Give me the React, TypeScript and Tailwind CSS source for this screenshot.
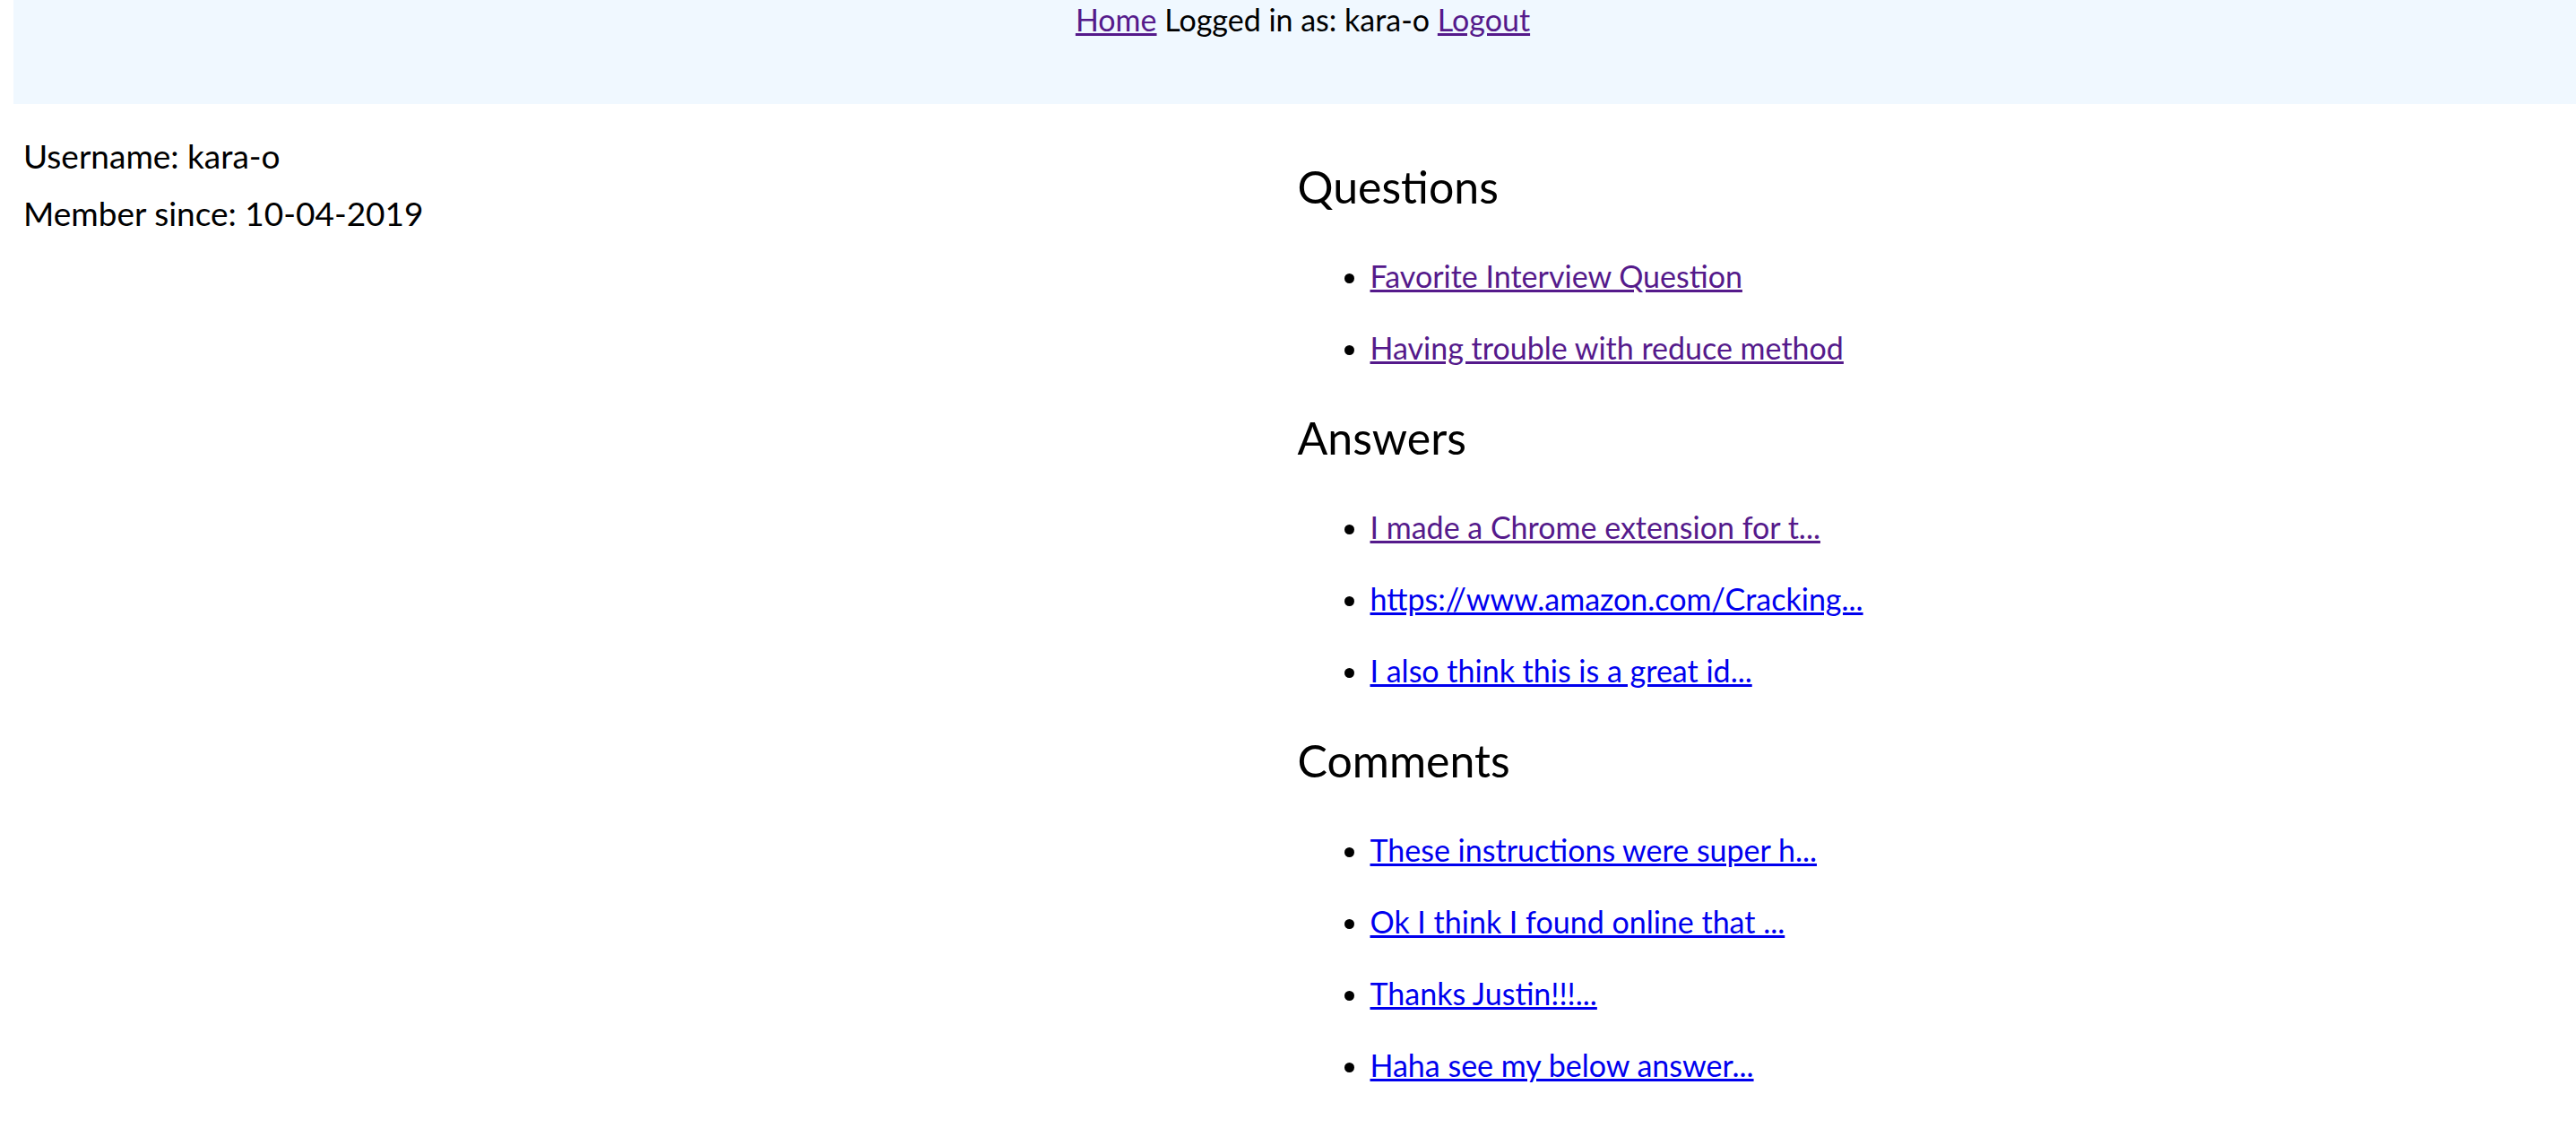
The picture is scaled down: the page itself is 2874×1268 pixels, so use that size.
const questions = [
  { label: "Favorite Interview Question", visited: true },
  { label: "Having trouble with reduce method", visited: true },
];

const answers = [
  { label: "I made a Chrome extension for t...", visited: true },
  { label: "https://www.amazon.com/Cracking...", visited: false },
  { label: "I also think this is a great id...", visited: false },
];

const comments = [
  { label: "These instructions were super h...", visited: false },
  { label: "Ok I think I found online that ...", visited: false },
  { label: "Thanks Justin!!!...", visited: false },
  { label: "Haha see my below answer...", visited: false },
];

type Item = { label: string; visited: boolean };

const Section = ({ title, items }: { title: string; items: Item[] }) => (
  <section>
    <h2 className="flex h-[120px] items-center text-[50px] leading-none">{title}</h2>
    <ul className="list-disc pl-[81px]">
      {items.map((item) => (
        <li key={item.label} className="h-[80px] leading-[80px] text-[34px]">
          <a
            href="#"
            className={item.visited ? "text-[#551a8b] underline" : "text-[#0000ee] underline"}
          >
            {item.label}
          </a>
        </li>
      ))}
    </ul>
  </section>
);

export default function App() {
  return (
    <div className="min-h-screen bg-white pl-[15px] text-black [font-family:Lato,'Noto_Sans',sans-serif]">
      {/* top nav bar */}
      <header className="flex h-[116px] justify-center bg-[#f0f8ff] pl-[18px] pt-[2px] text-[34px] leading-[40px]">
        <div>
          <a href="#" className="text-[#551a8b] underline">Home</a> Logged in as: kara-o{" "}
          <a href="#" className="text-[#551a8b] underline">Logout</a>
        </div>
      </header>

      <main className="grid grid-cols-2">
        <div className="flex flex-col pl-[11px] pt-[36px] text-[37px]">
          <p className="h-[64px] leading-[44px]">Username: kara-o</p>
          <p className="leading-[44px]">Member since: 10-04-2019</p>
        </div>
        <div className="pl-[3px] pt-[32px]">
          <Section title="Questions" items={questions} />
          <Section title="Answers" items={answers} />
          <Section title="Comments" items={comments} />
        </div>
      </main>
    </div>
  );
}
